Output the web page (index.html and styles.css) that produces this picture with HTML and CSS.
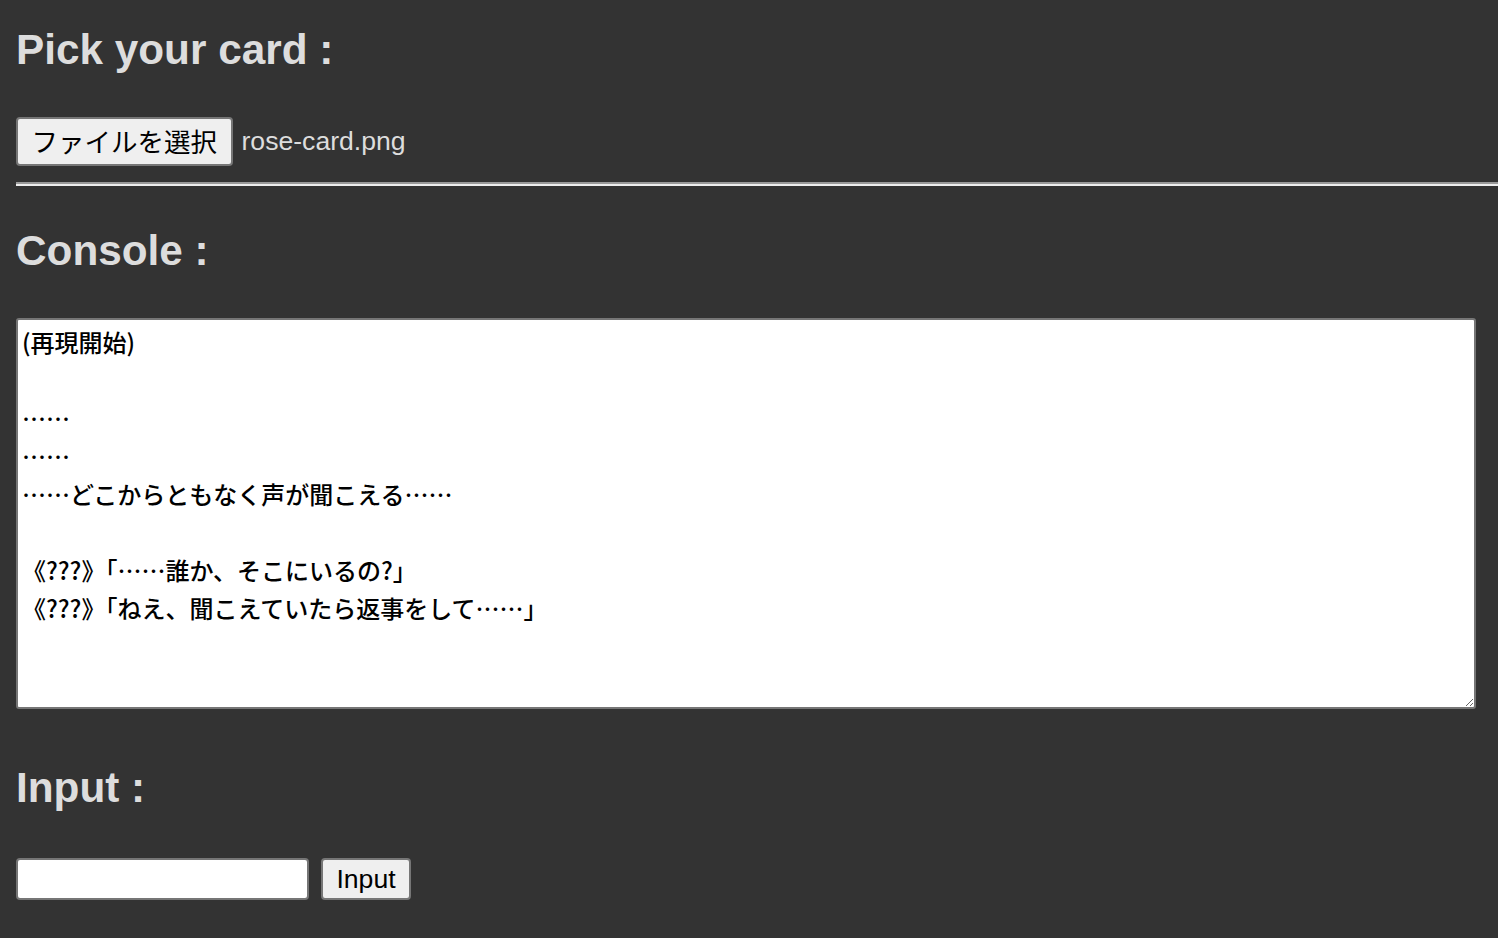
FILE: index.html
```html
<!DOCTYPE html>
<html lang="ja">
<head>
<meta charset="utf-8">
<title>Card Console</title>
<link rel="stylesheet" href="styles.css">
</head>
<body>
<main class="page">
  <h2 class="heading heading-first">Pick your card :</h2>
  <div class="file-row">
    <button class="btn file-btn" type="button">ファイルを選択</button>
    <span class="file-name">rose-card.png</span>
  </div>
  <hr class="rule">
  <h2 class="heading heading-console">Console :</h2>
  <textarea class="console" readonly>(再現開始)

……
……
……どこからともなく声が聞こえる……

《???》「……誰か、そこにいるの?」
《???》「ねえ、聞こえていたら返事をして……」</textarea>
  <h2 class="heading heading-input">Input :</h2>
  <div class="input-row">
    <input class="text-input" type="text">
    <button class="btn input-btn" type="button">Input</button>
  </div>
</main>
</body>
</html>
```

FILE: styles.css
```css
html, body {
  margin: 0;
  padding: 0;
  background: #333333;
  overflow: hidden;
}

.page {
  padding: 26px 0 0 16px;
  display: flex;
  flex-direction: column;
  align-items: flex-start;
}

.heading {
  margin: 0;
  font-family: "Liberation Sans", Arial, sans-serif;
  font-weight: bold;
  font-size: 42.3px;
  line-height: 48px;
  color: #dddddd;
}

.heading-console {
  margin-top: 41px;
}

.heading-input {
  margin-top: 55px;
}

.file-row {
  margin-top: 43px;
  display: flex;
  align-items: center;
  gap: 9px;
}

.btn {
  box-sizing: border-box;
  background: #efefef;
  border: 2px solid #767676;
  border-radius: 4px;
  color: #000;
  margin: 0;
  cursor: default;
}

.file-btn {
  height: 49px;
  padding: 0 13.5px;
  font-family: "Noto Sans CJK JP", "Liberation Sans", sans-serif;
  font-size: 26.5px;
  line-height: 1;
}

.file-name {
  font-family: "Liberation Sans", Arial, sans-serif;
  font-size: 26.6px;
  color: #dddddd;
}

.rule {
  align-self: stretch;
  margin: 16px 0 0 0;
  height: 0;
  border: 0;
  border-top: 2px solid #9a9a9a;
  border-bottom: 2px solid #eeeeee;
}

.console {
  box-sizing: border-box;
  margin-top: 43px;
  width: 1460px;
  height: 391px;
  padding: 3px 4px;
  border: 2px solid #767676;
  border-radius: 3px;
  background: #ffffff;
  color: #000000;
  font-family: "Noto Sans CJK JP", sans-serif;
  font-weight: 500;
  font-size: 24px;
  line-height: 38px;
  resize: both;
  overflow: hidden;
  outline: none;
}

.input-row {
  margin-top: 46px;
  display: flex;
  align-items: center;
  gap: 12px;
}

.text-input {
  box-sizing: border-box;
  width: 293px;
  height: 42px;
  margin: 0;
  border: 2px solid #767676;
  border-radius: 4px;
  background: #ffffff;
  font-size: 26px;
}

.input-btn {
  height: 42px;
  width: 90px;
  padding: 0;
  font-family: "Liberation Sans", Arial, sans-serif;
  font-size: 26.6px;
  line-height: 1;
}
```
